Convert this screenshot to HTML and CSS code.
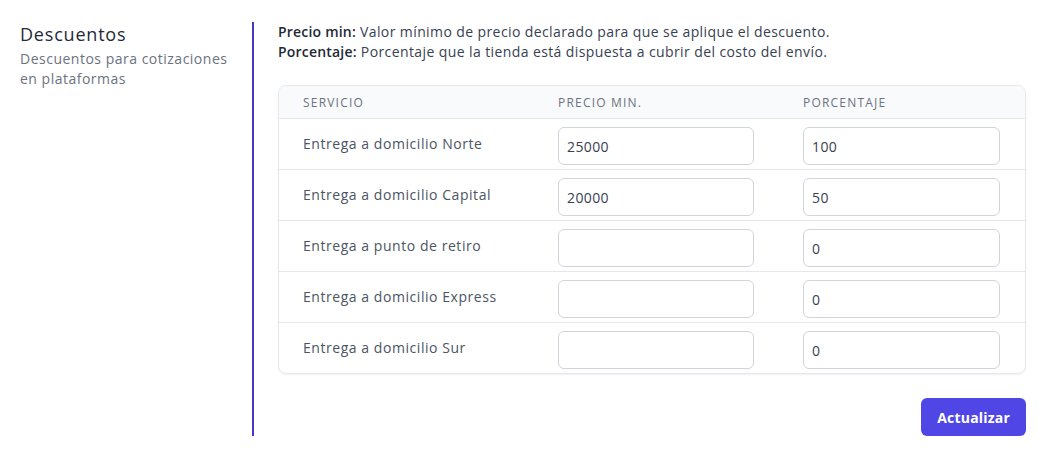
FILE: index.html
```html
<!DOCTYPE html>
<html lang="es">
<head>
<meta charset="utf-8">
<link rel="stylesheet" href="styles.css">
</head>
<body>
<div class="page">
  <aside class="side">
    <h2 class="title">Descuentos</h2>
    <p class="subtitle">Descuentos para cotizaciones en plataformas</p>
  </aside>
  <section class="main">
    <p class="help"><strong>Precio min:</strong> Valor mínimo de precio declarado para que se aplique el descuento.<br><strong>Porcentaje:</strong> Porcentaje que la tienda está dispuesta a cubrir del costo del envío.</p>
    <div class="card">
      <div class="row head">
        <div class="cell">Servicio</div>
        <div class="cell">Precio min.</div>
        <div class="cell">Porcentaje</div>
      </div>
      <div class="row">
        <div class="cell name">Entrega a domicilio Norte</div>
        <div class="cell in"><input class="field" value="25000"></div>
        <div class="cell in"><input class="field" value="100"></div>
      </div>
      <div class="row">
        <div class="cell name">Entrega a domicilio Capital</div>
        <div class="cell in"><input class="field" value="20000"></div>
        <div class="cell in"><input class="field" value="50"></div>
      </div>
      <div class="row">
        <div class="cell name">Entrega a punto de retiro</div>
        <div class="cell in"><input class="field" value=""></div>
        <div class="cell in"><input class="field" value="0"></div>
      </div>
      <div class="row">
        <div class="cell name">Entrega a domicilio Express</div>
        <div class="cell in"><input class="field" value=""></div>
        <div class="cell in"><input class="field" value="0"></div>
      </div>
      <div class="row">
        <div class="cell name">Entrega a domicilio Sur</div>
        <div class="cell in"><input class="field" value=""></div>
        <div class="cell in"><input class="field" value="0"></div>
      </div>
    </div>
    <div class="actions">
      <button class="btn">Actualizar</button>
    </div>
  </section>
</div>
</body>
</html>
```

FILE: styles.css
```css
* { box-sizing: border-box; }
html, body { margin: 0; padding: 0; background: #fff; }
body {
  font-family: "Open Sans", "Noto Sans", sans-serif;
  color: #374151;
}
.page {
  display: flex;
  padding: 22px 21px 0 20px;
}
.side {
  width: 232px;
  flex: none;
  padding-right: 18px;
}
.title {
  margin: 0;
  font-size: 18px;
  font-weight: 500;
  line-height: 24px;
  letter-spacing: 0.8px;
  color: #1f2937;
}
.subtitle {
  margin: 3px 0 0;
  font-size: 14px;
  line-height: 20px;
  letter-spacing: 0.5px;
  color: #6b7280;
}
.main {
  flex: 1;
  border-left: 2px solid #4338ca;
  padding-left: 24px;
}
.help {
  margin: 0;
  font-size: 14px;
  line-height: 20px;
  letter-spacing: 0.4px;
  color: #374151;
}
.help strong { font-weight: 600; color: #1f2937; letter-spacing: 0.2px; }
.card {
  margin-top: 23px;
  border: 1px solid #e5e7eb;
  border-radius: 8px;
  box-shadow: 0 1px 2px rgba(0,0,0,0.06);
  overflow: hidden;
}
.row {
  display: grid;
  grid-template-columns: 255px 245px 1fr;
  border-top: 1px solid #e5e7eb;
  height: 51px;
}
.row.head {
  border-top: none;
  height: 32px;
  background: #f9fafb;
}
.cell {
  padding: 0 24px;
  display: flex;
  align-items: center;
}
.head .cell {
  font-size: 12px;
  letter-spacing: 0.1em;
  text-transform: uppercase;
  color: #6b7280;
  padding-top: 1px;
}
.name {
  font-size: 14px;
  letter-spacing: 0.55px;
  color: #4b5563;
  padding-bottom: 2px;
}
.in {
  align-items: flex-start;
  padding-top: 8px;
  padding-right: 25px;
}
.field {
  width: 100%;
  height: 38px;
  border: 1px solid #d1d5db;
  border-radius: 6px;
  padding: 0 8px;
  font-family: inherit;
  font-size: 14px;
  letter-spacing: 0.4px;
  color: #374151;
  background: #fff;
  outline: none;
}
.actions {
  display: flex;
  justify-content: flex-end;
  margin-top: 24px;
}
.btn {
  height: 38px;
  padding: 0 16px;
  border: none;
  border-radius: 6px;
  background: #4f46e5;
  color: #fff;
  font-family: inherit;
  font-size: 14px;
  font-weight: 700;
  letter-spacing: 0.2px;
}
```
